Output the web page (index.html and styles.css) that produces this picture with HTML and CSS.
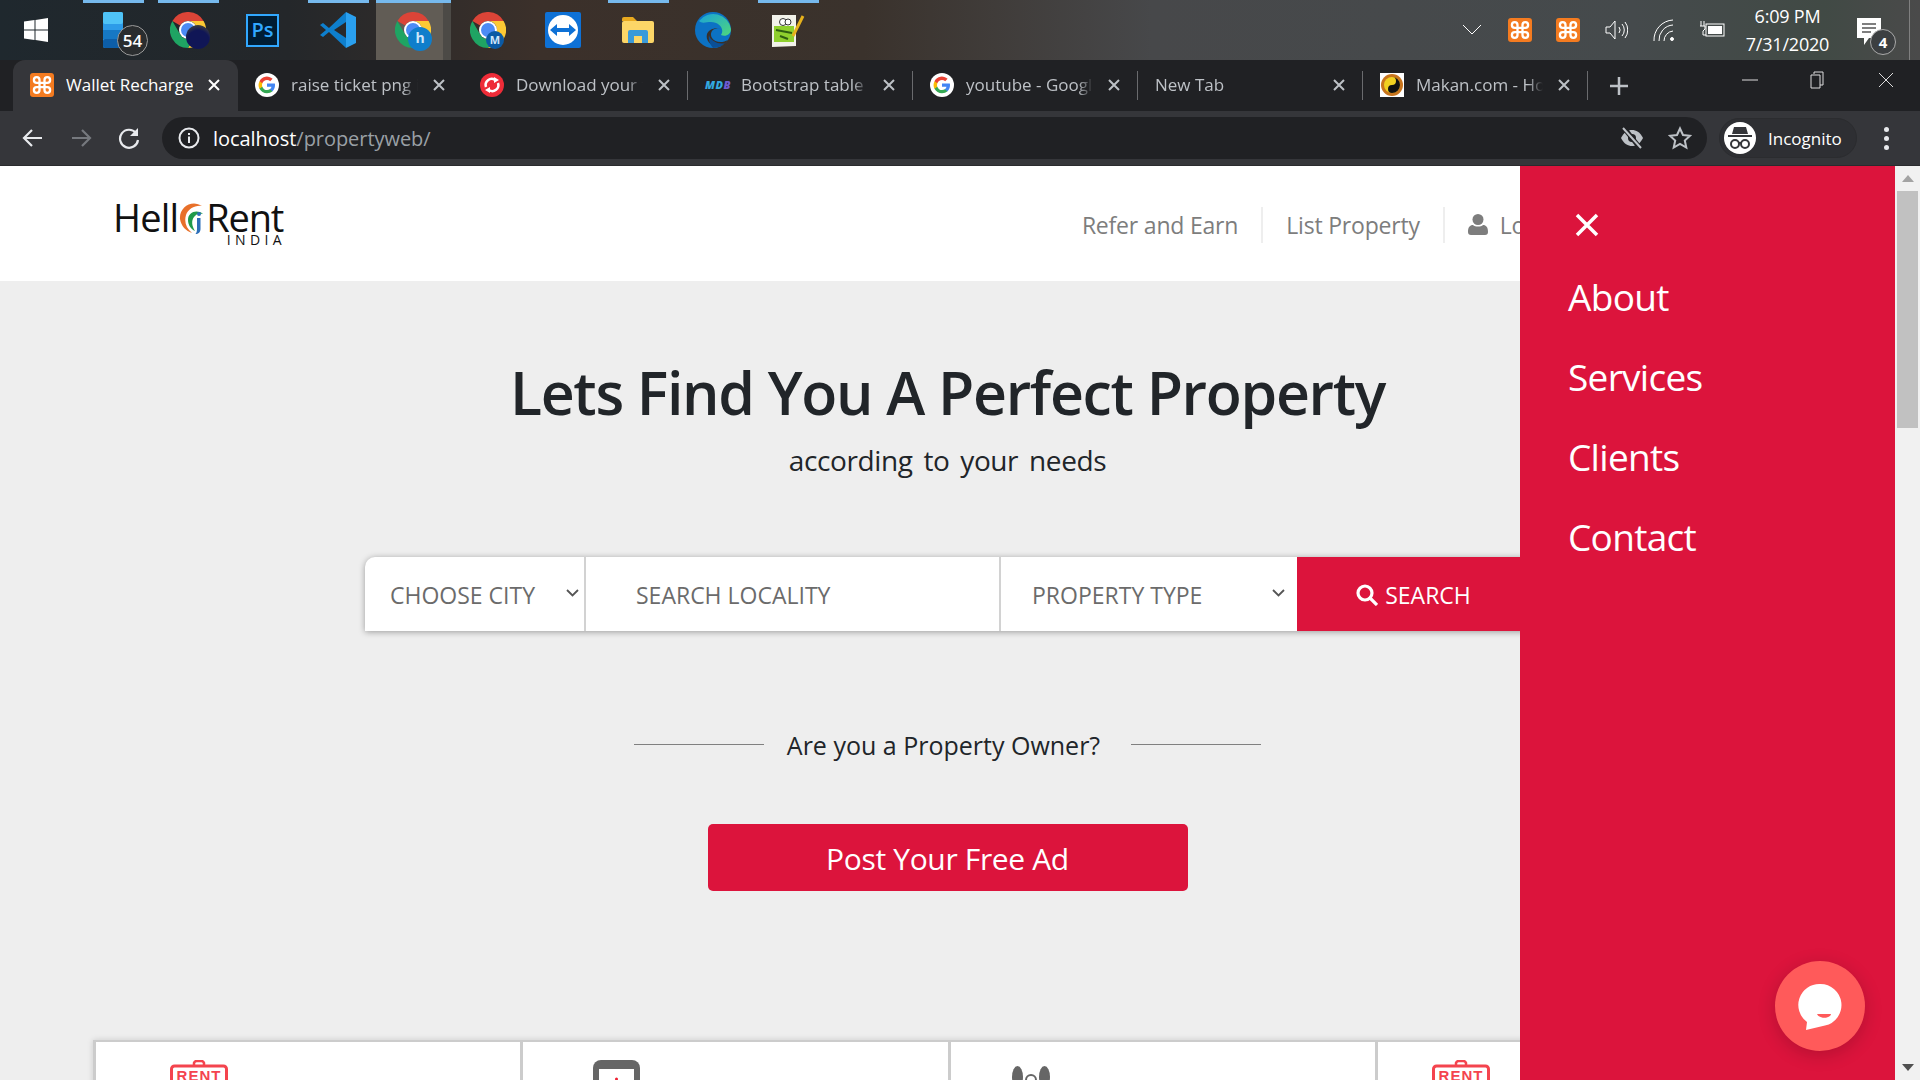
FILE: index.html
```html
<!DOCTYPE html>
<html lang="en">

<head>
    <meta charset="UTF-8">
    <meta name="viewport" content="width=device-width, initial-scale=1.0">
    <title>Hello Rent India</title>
    <link rel="stylesheet" href="styles.css">
</head>

<body>
    <svg class="sprites" xmlns="http://www.w3.org/2000/svg">
        <symbol id="chrome" viewBox="0 0 36 36">
            <path fill="#db4437" d="M2.4 9A18 18 0 0 1 33.6 9H18A9 9 0 0 0 10.2 13.5Z" />
            <path fill="#fcc934" d="M33.6 9A18 18 0 0 1 18 36L25.8 22.5A9 9 0 0 0 18 9Z" />
            <path fill="#1fa463" d="M2.4 9L10.2 22.5A9 9 0 0 0 25.8 22.5L18 36A18 18 0 0 1 2.4 9Z" />
            <circle cx="18" cy="18" r="9" fill="#fff" />
            <circle cx="18" cy="18" r="7" fill="#4c8bf5" />
        </symbol>
        <symbol id="google" viewBox="0 0 24 24">
            <circle cx="12" cy="12" r="12" fill="#fff" />
            <path fill="#4285f4" d="M20 12.2c0-.6 0-1.100-.2-1.600H12v3.100h4.500c-.2 1-.8 1.900-1.700 2.500v2h2.700c1.600-1.500 2.500-3.600 2.500-6Z" />
            <path fill="#34a853" d="M12 20.300c2.200 0 4.100-.7 5.500-2l-2.700-2c-.7.500-1.700.8-2.800.8-2.200 0-4-1.400-4.700-3.400H4.500v2.100c1.400 2.700 4.200 4.500 7.500 4.500Z" />
            <path fill="#fbbc05" d="M7.300 13.700c-.4-1.100-.4-2.300 0-3.400V8.200H4.500a8.300 8.300 0 0 0 0 7.600Z" />
            <path fill="#ea4335" d="M12 7c1.200 0 2.300.4 3.200 1.200l2.400-2.400A8.300 8.300 0 0 0 4.500 8.200l2.800 2.100C8 8.400 9.800 7 12 7Z" />
        </symbol>
        <symbol id="xampp" viewBox="0 0 24 24">
            <rect width="24" height="24" rx="3" fill="#f47b20" />
            <path fill="none" stroke="#fff" stroke-width="2.300" d="M9.500 9.500V7a2.800 2.800 0 1 0-2.800 2.800H17.300a2.800 2.800 0 1 0-2.800-2.800V17a2.800 2.800 0 1 0 2.800-2.800H6.700a2.800 2.800 0 1 0 2.800 2.800Z" />
        </symbol>
        <symbol id="close" viewBox="0 0 14 14">
            <path stroke="currentColor" stroke-width="2" d="M2 2l10 10M12 2L2 12" />
        </symbol>
        <symbol id="rent" viewBox="0 0 58 20">
            <path fill="none" stroke="#f4444e" stroke-width="2.500" d="M24 6V3a3 3 0 0 1 3-2h4a3 3 0 0 1 3 2v3" />
            <path fill="none" stroke="#f4444e" stroke-width="3" d="M1.500 22V9a3 3 0 0 1 3-3h49a3 3 0 0 1 3 3v13" />
            <text x="29" y="21" text-anchor="middle" class="rent-word">RENT</text>
        </symbol>
    </svg>

    <div class="taskbar">
        <div class="start">
            <svg width="24" height="24" viewBox="0 0 24 24" fill="#fff">
                <path d="M0 3.500L10.500 2v9.500H0ZM11.500 1.900L24 0v11.500H11.500ZM0 12.500h10.500V22L0 20.500ZM11.500 12.500H24V24l-12.500-1.900Z" />
            </svg>
        </div>
        <div class="task open">
            <svg width="20" height="36" viewBox="0 0 20 36">
                <rect width="20" height="36" rx="2" fill="#2d9be8" />
                <rect y="0" width="20" height="12" rx="2" fill="#4fc3f7" />
                <rect y="18" width="20" height="9" fill="#1678c4" />
                <rect y="27" width="20" height="9" rx="2" fill="#0d5ea8" />
            </svg>
            <span class="task-count">54</span>
        </div>
        <div class="task open">
            <svg width="36" height="36"><use href="#chrome" /></svg>
            <span class="task-moth"></span>
        </div>
        <div class="task">
            <span class="ps-icon">Ps</span>
        </div>
        <div class="task open">
            <svg width="36" height="36" viewBox="0 0 36 36">
                <path fill="#2aa0ef" d="M26 0L36 5V31L26 36Z" />
                <path fill="#0e7fcd" d="M26 0L9 16L3 11L0 13L6 18L0 23L3 25L9 20L26 36V26L14 18L26 10Z" />
            </svg>
        </div>
        <div class="task active">
            <svg width="36" height="36"><use href="#chrome" /></svg>
            <span class="chrome-badge big">h</span>
        </div>
        <div class="task">
            <svg width="36" height="36"><use href="#chrome" /></svg>
            <span class="chrome-badge">M</span>
        </div>
        <div class="task">
            <svg width="36" height="36" viewBox="0 0 36 36">
                <rect width="36" height="36" rx="2" fill="#0e71d6" />
                <circle cx="18" cy="18" r="15" fill="#fff" />
                <path fill="#0e71d6" d="M5 18l7-6v4h12v-4l7 6-7 6v-4H12v4Z" />
            </svg>
        </div>
        <div class="task open">
            <svg width="32" height="26" viewBox="0 0 32 26">
                <path fill="#e8a91f" d="M0 2a2 2 0 0 1 2-2h9l4 4H0Z" />
                <rect y="4" width="32" height="22" rx="2" fill="#fcd667" />
                <path fill="#3a9ad9" d="M6 26V15a2 2 0 0 1 2-2h16a2 2 0 0 1 2 2v11h-6v-7h-8v7Z" />
            </svg>
        </div>
        <div class="task">
            <svg width="36" height="36" viewBox="0 0 36 36">
                <defs>
                    <linearGradient id="edge-top" x1="0" y1="0" x2="1" y2="1">
                        <stop offset="0" stop-color="#1aa3d8" />
                        <stop offset="1" stop-color="#4fd67c" />
                    </linearGradient>
                </defs>
                <circle cx="18" cy="18" r="18" fill="#0c72c4" />
                <path fill="url(#edge-top)" d="M4 9A18 18 0 0 1 36 17C36 23 30 25 26 23C30 17 24 10 16 10C11 10 7 12 4 9Z" />
                <path fill="#38302a" d="M33 28C28 31 20 31 17 26C14 21 18 15 25 17C21 15 14 17 12 22C10 29 17 36 26 34C29 33 31 31 33 28Z" />
                <path fill="#0b4f96" d="M30 31A18 18 0 0 1 18 36C15 32 13 28 14 23C15 29 24 33 30 31Z" />
            </svg>
        </div>
        <div class="task open">
            <svg width="34" height="36" viewBox="0 0 34 36">
                <path fill="#f2f2ea" d="M1 3h24v31l-24 1Z" />
                <path fill="#8fd02e" d="M3 14h20v16H3Z" />
                <circle cx="12" cy="10" r="3.500" fill="#fff" stroke="#333" />
                <circle cx="17" cy="10" r="3" fill="#fff" stroke="#333" />
                <path stroke="#2f5e10" stroke-width="2" d="M5 18l16 3M9 24l8 3" />
                <path stroke="#e7b21c" stroke-width="3" d="M22 24L32 4" />
            </svg>
        </div>
        <div class="tray">
            <div class="tray-item">
                <svg width="20" height="12" viewBox="0 0 20 12" fill="none" stroke="#fff"><path d="M1 1l9 9 9-9" /></svg>
            </div>
            <div class="tray-item"><svg width="24" height="24"><use href="#xampp" /></svg></div>
            <div class="tray-item"><svg width="24" height="24"><use href="#xampp" /></svg></div>
            <div class="tray-item">
                <svg width="24" height="24" viewBox="0 0 24 24" fill="none" stroke="#fff">
                    <path d="M2 9h4l5-6v18l-5-6H2ZM15 9a5 5 0 0 1 0 6M18 6a9 9 0 0 1 0 12M21 4a13 13 0 0 1 0 16" />
                </svg>
            </div>
            <div class="tray-item">
                <svg width="24" height="24" viewBox="0 0 24 24" fill="none" stroke="#fff">
                    <path d="M2 23A20 20 0 0 1 21 2M7 23A15 15 0 0 1 21 7M12 23A10 10 0 0 1 21 13" />
                    <circle cx="20" cy="21" r="1.500" fill="#fff" />
                </svg>
            </div>
            <div class="tray-item">
                <svg width="26" height="24" viewBox="0 0 26 24">
                    <path fill="none" stroke="#fff" d="M2 3v5M5 3v5M1 8h5v3l-2 2v4h3" />
                    <rect x="7" y="6" width="18" height="12" fill="none" stroke="#fff" />
                    <rect x="9" y="8" width="14" height="8" fill="#fff" />
                </svg>
            </div>
            <div class="clock">
                <span>6:09 PM</span>
                <span>7/31/2020</span>
            </div>
            <div class="tray-note">
                <svg width="24" height="28" viewBox="0 0 24 28">
                    <path fill="#fff" d="M0 0h24v20H12l-5 7v-7H0Z" />
                    <path stroke="#555" stroke-width="1.500" d="M5 6h14M5 10h14M5 14h9" />
                </svg>
                <span class="note-count">4</span>
            </div>
            <div class="show-desktop"></div>
        </div>
    </div>

    <div class="tabstrip">
        <div class="tab selected">
            <svg class="favicon" width="24" height="24"><use href="#xampp" /></svg>
            <span class="tab-title">Wallet Recharge</span>
            <svg class="tab-close" width="14" height="14"><use href="#close" /></svg>
        </div>
        <div class="tab">
            <svg class="favicon" width="24" height="24"><use href="#google" /></svg>
            <span class="tab-title">raise ticket png i</span>
            <svg class="tab-close" width="14" height="14"><use href="#close" /></svg>
        </div>
        <div class="tab">
            <svg class="favicon" width="24" height="24" viewBox="0 0 24 24">
                <circle cx="12" cy="12" r="12" fill="#ee2c38" />
                <path fill="none" stroke="#fff" stroke-width="2.500" d="M6 14a6 6 0 0 1 9-7M18 10a6 6 0 0 1-9 7" />
                <path fill="#fff" d="M14 4l5 3-5 3ZM10 20l-5-3 5-3Z" />
            </svg>
            <span class="tab-title">Download your f</span>
            <svg class="tab-close" width="14" height="14"><use href="#close" /></svg>
        </div>
        <div class="tab">
            <span class="favicon mdb"><span class="mdb-m">MD</span><span class="mdb-b">B</span></span>
            <span class="tab-title">Bootstrap table</span>
            <svg class="tab-close" width="14" height="14"><use href="#close" /></svg>
        </div>
        <div class="tab">
            <svg class="favicon" width="24" height="24"><use href="#google" /></svg>
            <span class="tab-title">youtube - Googl</span>
            <svg class="tab-close" width="14" height="14"><use href="#close" /></svg>
        </div>
        <div class="tab no-icon">
            <span class="tab-title">New Tab</span>
            <svg class="tab-close" width="14" height="14"><use href="#close" /></svg>
        </div>
        <div class="tab">
            <svg class="favicon" width="24" height="24" viewBox="0 0 24 24">
                <rect width="24" height="24" fill="#fff" />
                <circle cx="12" cy="12" r="11" fill="#c8741c" />
                <circle cx="12" cy="12" r="8" fill="#f0d020" />
                <path fill="#111" d="M12 4a4 4 0 0 1 0 8 4 4 0 0 0 0 8A8 8 0 0 0 12 4Z" />
            </svg>
            <span class="tab-title">Makan.com - Ho</span>
            <svg class="tab-close" width="14" height="14"><use href="#close" /></svg>
        </div>
        <div class="new-tab">
            <svg width="18" height="18" viewBox="0 0 18 18"><path stroke="#bdc1c6" stroke-width="2.500" d="M9 0v18M0 9h18" /></svg>
        </div>
        <div class="window-controls">
            <div class="window-btn"><svg width="16" height="16" fill="none" stroke="#ddd"><path d="M0 8h16" /></svg></div>
            <div class="window-btn"><svg width="16" height="18" fill="none" stroke="#ddd"><path d="M4 3V1h9v13h-3M1 4h9v13H1Z" /></svg></div>
            <div class="window-btn"><svg width="16" height="16" fill="none" stroke="#ddd"><path d="M1 1l14 14M15 1L1 15" /></svg></div>
        </div>
    </div>

    <div class="toolbar">
        <svg class="tool-btn" width="22" height="22" viewBox="0 0 22 22" fill="none" stroke="#e8eaed" stroke-width="2.200"><path d="M20 11H3M10 3l-8 8 8 8" /></svg>
        <svg class="tool-btn" width="22" height="22" viewBox="0 0 22 22" fill="none" stroke="#76797e" stroke-width="2.200"><path d="M2 11h17M12 3l8 8-8 8" /></svg>
        <svg class="tool-btn" width="22" height="22" viewBox="0 0 22 22" fill="none" stroke="#e8eaed" stroke-width="2.200"><path d="M18 6a9 9 0 1 0 2 7" /><path fill="#e8eaed" stroke="none" d="M20 1v8h-8Z" /></svg>
        <div class="omnibox">
            <svg width="22" height="22" viewBox="0 0 22 22" fill="none" stroke="#e8eaed" stroke-width="2"><circle cx="11" cy="11" r="9.500" /><path d="M11 9.500V16M11 6v2" /></svg>
            <span class="url"><span class="url-host">localhost</span>/propertyweb/</span>
            <svg class="omni-eye" width="24" height="24" viewBox="0 0 24 24">
                <path fill="#bdc1c6" d="M1 12C4 6 8 4 12 4s8 2 11 8c-3 6-7 8-11 8s-8-2-11-8Z" />
                <circle cx="12" cy="12" r="4" fill="#202124" />
                <path stroke="#202124" stroke-width="5" d="M4 2l16 20" />
                <path stroke="#bdc1c6" stroke-width="2" d="M3 2l18 20" />
            </svg>
            <svg class="omni-star" width="24" height="24" viewBox="0 0 24 24" fill="none" stroke="#bdc1c6" stroke-width="2"><path d="M12 2.500l3 6.500 7 .8-5.200 4.700 1.500 7L12 17.900l-6.300 3.600 1.500-7L2 9.800 9 9Z" /></svg>
        </div>
        <div class="incognito">
            <span class="incognito-face">
                <svg width="26" height="26" viewBox="0 0 26 26">
                    <path fill="#35363a" d="M7 2h12l2 7H5ZM1 10h24v2H1Z" />
                    <circle cx="8" cy="19" r="4" fill="none" stroke="#35363a" stroke-width="2" />
                    <circle cx="18" cy="19" r="4" fill="none" stroke="#35363a" stroke-width="2" />
                    <path stroke="#35363a" stroke-width="2" d="M12 18h2" />
                </svg>
            </span>
            <span>Incognito</span>
        </div>
        <div class="kebab"><i></i><i></i><i></i></div>
    </div>

    <div class="viewport">
        <main class="page">
            <header class="site-header">
                <a class="logo">
                    <span class="logo-word"><span>Hell</span><svg class="logo-mark" width="31" height="34" viewBox="0 0 27 34">
                            <path fill="#e8702a" d="M24 5C14 -2 1 6 2 18c1 7 6 12 12 14C8 27 6 21 8 14 10 8 17 4 24 5Z" />
                            <path fill="#1f9a4a" d="M25 13C19 8 10 11 10 19c0 5 3 9 7 11-3-5-4-10-1-14 2-3 5-4 9-3Z" />
                            <path fill="#2c6fb8" d="M19 17h3.500v11c0 3-2 5-5 5 1-1 1.500-3 1.500-5Z" />
                            <circle cx="21" cy="13" r="2" fill="#2c6fb8" />
                        </svg><span class="logo-rent">Rent</span></span>
                    <span class="logo-sub">INDIA</span>
                </a>
                <nav class="site-nav">
                    <a class="nav-link">Refer and Earn</a>
                    <a class="nav-link">List Property</a>
                    <a class="nav-link login">
                        <svg width="20" height="21" viewBox="0 0 20 21" fill="#7d7d7d">
                            <circle cx="10" cy="5.500" r="5.500" />
                            <path d="M0 18c0-5 2-7 5-7 1 1 3 1.500 5 1.500s4-.5 5-1.500c3 0 5 2 5 7 0 2-1 3-3 3H3c-2 0-3-1-3-3Z" />
                        </svg>
                        Login
                    </a>
                </nav>
            </header>

            <section class="hero">
                <h1>Lets Find You A Perfect Property</h1>
                <p class="hero-sub">according to your needs</p>

                <form class="search-bar">
                    <div class="search-cell city">CHOOSE CITY
                        <svg class="caret" width="13" height="8" viewBox="0 0 13 8" fill="none" stroke="#555" stroke-width="1.800"><path d="M1 1l5.500 5.500L12 1" /></svg>
                    </div>
                    <div class="search-cell locality">SEARCH LOCALITY</div>
                    <div class="search-cell type">PROPERTY TYPE
                        <svg class="caret" width="13" height="8" viewBox="0 0 13 8" fill="none" stroke="#555" stroke-width="1.800"><path d="M1 1l5.500 5.500L12 1" /></svg>
                    </div>
                    <button class="search-btn" type="button">
                        <svg width="22" height="22" viewBox="0 0 22 22" fill="none" stroke="#fff" stroke-width="3.200"><circle cx="9" cy="9" r="7" /><path d="M14 14l7 7" /></svg>
                        SEARCH
                    </button>
                </form>

                <div class="owner-row">
                    <span class="owner-line"></span>
                    <span class="owner-text">Are you a Property Owner?</span>
                    <span class="owner-line"></span>
                </div>

                <a class="post-btn">Post Your Free Ad</a>

                <div class="cards">
                    <div class="card card-one"><svg width="58" height="20"><use href="#rent" /></svg></div>
                    <div class="card card-two">
                        <svg width="47" height="21" viewBox="0 0 47 21">
                            <path fill="#666" d="M0 21V8a8 8 0 0 1 8-8h31a8 8 0 0 1 8 8v13Z" />
                            <rect x="6" y="9" width="35" height="12" fill="#fff" />
                            <circle cx="23.500" cy="19" r="1.500" fill="#e23" />
                        </svg>
                    </div>
                    <div class="card card-three">
                        <svg width="38" height="15" viewBox="0 0 38 15" fill="#666">
                            <ellipse cx="5.500" cy="11" rx="5.500" ry="11" />
                            <ellipse cx="32.500" cy="11" rx="5.500" ry="11" />
                            <circle cx="19" cy="14" r="5" fill="none" stroke="#666" stroke-width="2" />
                        </svg>
                    </div>
                    <div class="card card-four"><svg width="58" height="20"><use href="#rent" /></svg></div>
                </div>
            </section>
        </main>

        <div class="scrollbar">
            <span class="arrow-up"></span>
            <div class="thumb"></div>
            <span class="arrow-down"></span>
        </div>

        <aside class="side-menu">
            <svg class="side-close" width="24" height="24" viewBox="0 0 24 24"><path stroke="#fff" stroke-width="3.500" d="M2 2l20 20M22 2L2 22" /></svg>
            <a>About</a>
            <a>Services</a>
            <a>Clients</a>
            <a>Contact</a>
        </aside>

        <div class="chat-btn">
            <svg width="46" height="48" viewBox="0 0 46 48">
                <path fill="#fff" d="M23 2a21 21 0 0 1 5 41.500L9 48l1-8A21 21 0 0 1 23 2Z" />
                <path fill="#ff5a5a" d="M20 32h14c-1 5-12 5-14 0Z" />
            </svg>
        </div>
    </div>
</body>

</html>
```
FILE: styles.css
```css
* {
    box-sizing: border-box;
}

body {
    margin: 0;
    height: 1080px;
    overflow: hidden;
    display: flex;
    flex-direction: column;
    font-family: "Open Sans", "Noto Sans", sans-serif;
    background-color: #eee;
}

.sprites {
    display: none;
}

.rent-word {
    font-family: "Liberation Sans", sans-serif;
    font-weight: bold;
    font-size: 15px;
    letter-spacing: 1px;
    fill: #f4444e;
}

/* windows taskbar */
.taskbar {
    height: 60px;
    flex: none;
    display: flex;
    background: linear-gradient(90deg, #1f282e 0, #24272a 15%, #3b302a 28%, #3a322c 45%, #47484a 60%, #454a4c 85%, #414a45 95%, #4a4a4a 100%);
}

.start {
    width: 76px;
    padding: 18px 0 0 24px;
}

.task {
    position: relative;
    width: 75px;
    display: flex;
    align-items: center;
    justify-content: center;
    padding-right: 2px;
}

.task.open::before,
.task.active::before {
    content: "";
    position: absolute;
    top: 0;
    left: 7px;
    width: 61px;
    height: 3px;
    background-color: #76b9ed;
}

.task.active {
    background: linear-gradient(90deg, #615c55 0, #615c55 90%, #4c4a46 90%);
}

.task.active::before {
    left: 0;
    width: 75px;
}

.task-count {
    position: absolute;
    left: 41px;
    top: 25px;
    width: 31px;
    height: 31px;
    border-radius: 50%;
    border: 1px solid #999;
    background-color: #2a2d2f;
    color: #fff;
    font-size: 17px;
    font-weight: 600;
    line-height: 29px;
    text-align: center;
}

.task-moth {
    position: absolute;
    left: 35px;
    top: 25px;
    width: 24px;
    height: 24px;
    border-radius: 50%;
    background: radial-gradient(circle at 50% 70%, #101656 0 55%, #5c5a30 100%);
}

.ps-icon {
    width: 33px;
    height: 33px;
    border: 2px solid #31a8ff;
    background-color: #001d34;
    color: #31a8ff;
    font-size: 20px;
    font-weight: 600;
    line-height: 27px;
    text-align: center;
}

.chrome-badge {
    position: absolute;
    left: 35px;
    top: 31px;
    width: 18px;
    height: 18px;
    border-radius: 50%;
    background-color: #0b5aa5;
    color: #cfe6fa;
    font-size: 11px;
    font-weight: 700;
    line-height: 18px;
    text-align: center;
}

.chrome-badge.big {
    left: 32px;
    top: 27px;
    width: 24px;
    height: 24px;
    background-color: #0f7ecb;
    font-size: 14px;
    line-height: 22px;
}

.tray {
    margin-left: auto;
    display: flex;
    align-items: stretch;
}

.tray-item {
    width: 48px;
    display: flex;
    align-items: center;
    justify-content: center;
}

.clock {
    width: 103px;
    display: flex;
    flex-direction: column;
    align-items: center;
    justify-content: center;
    gap: 6px;
    color: #fff;
    font-size: 18px;
    line-height: 22px;
    letter-spacing: -0.2px;
}

.tray-note {
    position: relative;
    width: 70px;
    padding: 18px 0 0 18px;
}

.note-count {
    position: absolute;
    left: 31px;
    top: 29px;
    width: 26px;
    height: 26px;
    border: 1px solid #aaa;
    border-radius: 50%;
    background-color: #3c3f41;
    color: #fff;
    font-size: 15px;
    font-weight: 700;
    line-height: 24px;
    text-align: center;
}

.show-desktop {
    width: 0;
    margin: 0 10px 0 0;
    border-left: 1px solid rgba(255, 255, 255, 0.3);
}

/* chrome tabs */
.tabstrip {
    height: 51px;
    flex: none;
    display: flex;
    padding-left: 13px;
    background-color: #202124;
}

.tab {
    position: relative;
    width: 225px;
    height: 51px;
    display: flex;
    align-items: center;
    padding: 0 0 2px 17px;
    color: #bdc1c6;
    font-size: 17px;
}

.tab::after {
    content: "";
    position: absolute;
    right: 0;
    top: 11px;
    height: 29px;
    border-right: 1px solid #6a6b6e;
}

.tab.selected {
    background-color: #35363a;
    color: #fff;
    border-radius: 12px 12px 0 0;
}

.tab.selected::after,
.tab:nth-child(2)::after {
    content: none;
}

.favicon {
    flex: none;
    width: 24px;
    height: 24px;
}

.mdb {
    font-size: 11px;
    font-weight: 800;
    line-height: 24px;
    letter-spacing: 0.5px;
    font-style: italic;
}

.mdb-m {
    color: #33a9e0;
}

.mdb-b {
    color: #6f5bd1;
}

.tab-title {
    width: 127px;
    margin-left: 12px;
    white-space: nowrap;
    overflow: hidden;
    -webkit-mask-image: linear-gradient(90deg, #000 88%, transparent);
    mask-image: linear-gradient(90deg, #000 88%, transparent);
}

.tab.selected .tab-title {
    -webkit-mask-image: none;
    mask-image: none;
}

.no-icon .tab-title {
    margin-left: 0;
    width: 163px;
}

.tab-close {
    flex: none;
    margin-left: 14px;
}

.new-tab {
    width: 62px;
    display: flex;
    align-items: center;
    justify-content: center;
}

.window-controls {
    margin-left: auto;
    display: flex;
    height: 40px;
}

.window-btn {
    width: 68px;
    display: flex;
    align-items: center;
    justify-content: center;
    padding-right: 1px;
}

/* chrome toolbar */
.toolbar {
    height: 55px;
    flex: none;
    display: flex;
    align-items: center;
    padding-left: 22px;
    background-color: #35363a;
    border-bottom: 1px solid #2a2b2e;
}

.tool-btn {
    margin-right: 26px;
    flex: none;
}

.tool-btn:nth-child(3) {
    margin-right: 22px;
}

.omnibox {
    width: 1545px;
    height: 42px;
    display: flex;
    align-items: center;
    padding: 0 12px 0 16px;
    border-radius: 21px;
    background-color: #202124;
}

.url {
    margin-left: 13px;
    color: #9aa0a6;
    font-size: 20px;
    letter-spacing: -0.05px;
}

.url-host {
    color: #fff;
}

.omni-eye {
    margin-left: auto;
    margin-right: 24px;
}

.omni-star {
    margin-right: 3px;
}

.incognito {
    width: 138px;
    height: 40px;
    margin-left: 12px;
    display: flex;
    align-items: center;
    gap: 12px;
    padding-left: 4px;
    border: 1px solid #2b2c2f;
    border-radius: 20px;
    background-color: #2e2f33;
    color: #fff;
    font-size: 17px;
}

.incognito-face {
    width: 32px;
    height: 32px;
    display: flex;
    align-items: center;
    justify-content: center;
    border-radius: 50%;
    background-color: #fff;
}

.kebab {
    margin-left: 27px;
    display: flex;
    flex-direction: column;
    gap: 4px;
}

.kebab i {
    width: 5px;
    height: 5px;
    border-radius: 50%;
    background-color: #e8eaed;
}

/* page */
.viewport {
    position: relative;
    flex: 1;
    display: flex;
    overflow: hidden;
}

.page {
    flex: 1;
    overflow: hidden;
    color: #212529;
}

.site-header {
    height: 115px;
    display: flex;
    align-items: center;
    justify-content: space-between;
    padding: 0 315px 0 113px;
    background-color: #fff;
}

.logo {
    display: block;
    width: 170px;
    color: #111;
    margin-top: -2px;
}

.logo-word {
    display: flex;
    align-items: flex-end;
    font-size: 38px;
    line-height: 36px;
    letter-spacing: -0.8px;
    white-space: nowrap;
}

.logo-rent {
    letter-spacing: -1.2px;
}

.logo-mark {
    margin: 0 -1px 0 -2px;
    flex: none;
}

.logo-sub {
    display: block;
    text-align: right;
    font-size: 14px;
    line-height: 13px;
    letter-spacing: 4.4px;
    margin: -2px -3px 0 0;
}

.site-nav {
    display: flex;
    align-items: center;
    margin-top: 2px;
}

.nav-link {
    height: 36px;
    display: flex;
    align-items: center;
    gap: 12px;
    padding: 0 23px;
    border-right: 2px solid #eee;
    color: #7d7d7d;
    font-size: 23px;
    letter-spacing: -0.2px;
    white-space: nowrap;
}

.nav-link.login {
    border-right: none;
}

.hero {
    display: flex;
    flex-direction: column;
    align-items: center;
    padding-top: 75px;
}

.hero h1 {
    margin: 0;
    font-size: 59px;
    font-weight: 600;
    line-height: 72px;
    letter-spacing: -1.300px;
}

.hero-sub {
    margin: 14px 0 0;
    font-size: 28px;
    line-height: 36px;
    letter-spacing: -0.4px;
    word-spacing: 4px;
}

.search-bar {
    width: 1165px;
    height: 74px;
    margin-top: 79px;
    display: grid;
    grid-template-columns: 221px 415px 296px 233px;
    border-radius: 10px 0 0 0;
    background-color: #fff;
    box-shadow: 0 1px 6px rgba(0, 0, 0, 0.35);
}

.search-cell {
    position: relative;
    display: flex;
    align-items: center;
    border-right: 2px solid #d2d2d2;
    color: #6b6b6b;
    font-size: 23px;
    white-space: nowrap;
}

.city {
    padding: 2px 0 0 25px;
}

.locality {
    padding: 2px 0 0 50px;
}

.type {
    padding: 2px 0 0 31px;
    border-right: none;
}

.caret {
    position: absolute;
    right: 5px;
    top: 32px;
}

.type .caret {
    right: 12px;
}

.search-btn {
    display: flex;
    align-items: center;
    justify-content: center;
    gap: 7px;
    padding: 2px 0 0;
    border: none;
    background-color: #dc143c;
    color: #fff;
    font-family: inherit;
    font-size: 23px;
}

.owner-row {
    margin-top: 94px;
    display: flex;
    align-items: center;
}

.owner-line {
    width: 130px;
    border-top: 1px solid #808080;
    margin-top: -6px;
}

.owner-text {
    margin: 0 31px 4px 23px;
    font-size: 25px;
    line-height: 40px;
}

.post-btn {
    width: 480px;
    height: 67px;
    margin-top: 55px;
    display: flex;
    align-items: center;
    justify-content: center;
    padding-top: 2px;
    border-radius: 5px;
    background-color: #dc143c;
    color: #fff;
    font-size: 30px;
    letter-spacing: -0.35px;
}

.cards {
    width: 1710px;
    height: 60px;
    margin-top: 149px;
    display: grid;
    grid-template-columns: repeat(4, 1fr);
    border-top: 2px solid #ccc;
    background-color: #fff;
    box-shadow: 0 0 6px rgba(0, 0, 0, 0.15);
}

.card {
    padding-top: 18px;
    border-left: 3px solid #ccc;
}

.card svg {
    display: block;
}

.card-one {
    padding-left: 74px;
}

.card-two {
    padding-left: 70px;
}

.card-three {
    padding-top: 24px;
    padding-left: 61px;
}

.card-four {
    padding-left: 54px;
}

/* right scrollbar */
.scrollbar {
    width: 25px;
    flex: none;
    display: flex;
    flex-direction: column;
    align-items: center;
    background-color: #f1f1f1;
}

.arrow-up,
.arrow-down {
    width: 0;
    height: 0;
    border-left: 6px solid transparent;
    border-right: 6px solid transparent;
}

.arrow-up {
    margin-top: 9px;
    border-bottom: 7px solid #a3a3a3;
}

.thumb {
    width: 21px;
    height: 237px;
    margin-top: 9px;
    background-color: #c1c1c1;
}

.arrow-down {
    margin-top: auto;
    margin-bottom: 9px;
    border-top: 7px solid #505050;
}

/* overlays */
.side-menu {
    position: absolute;
    top: 0;
    right: 25px;
    bottom: 0;
    width: 375px;
    display: flex;
    flex-direction: column;
    padding: 47px 0 0 48px;
    background-color: #dc143c;
}

.side-menu a {
    height: 80px;
    display: flex;
    align-items: center;
    color: #fff;
    font-size: 37px;
    letter-spacing: -0.7px;
}

.side-close {
    margin: 0 0 19px 7px;
    flex: none;
}

.chat-btn {
    position: absolute;
    right: 55px;
    bottom: 29px;
    width: 90px;
    height: 90px;
    display: flex;
    align-items: center;
    justify-content: center;
    border-radius: 50%;
    background-color: #ff5a5a;
    box-shadow: 0 4px 18px rgba(0, 0, 0, 0.18);
}
```
